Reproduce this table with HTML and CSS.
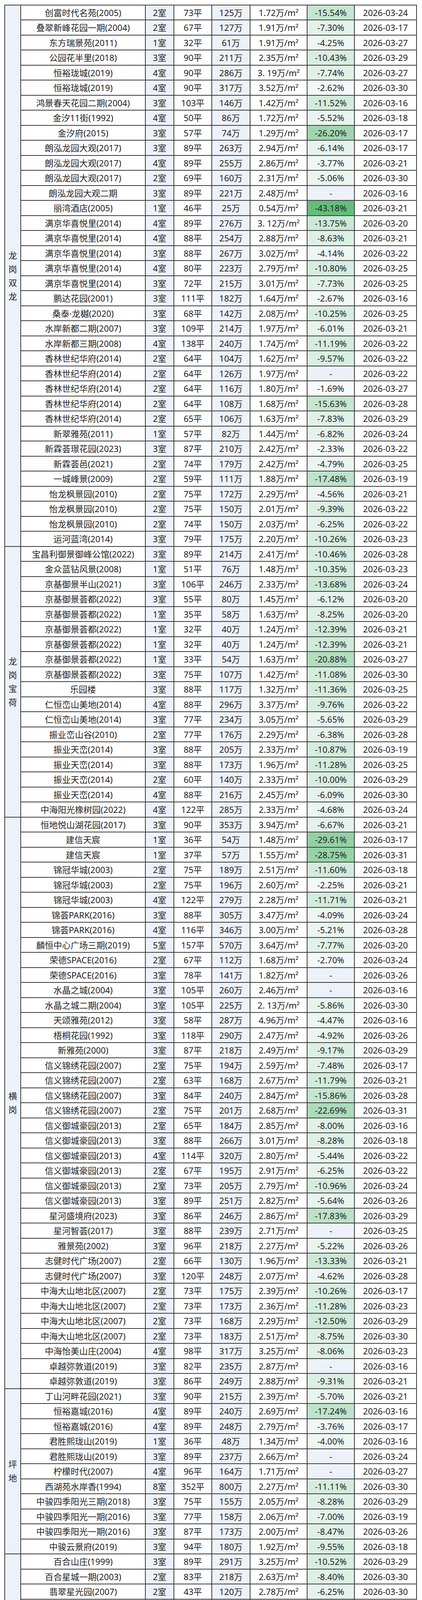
FILE: index.html
```html
<!DOCTYPE html>
<html lang="zh-CN">
<head>
<meta charset="utf-8">
<title>二手房降价明细</title>
<link rel="stylesheet" href="styles.css">
</head>
<body>
<div class="sheet">
<div class="region span-36"><span class="label">龙岗双龙</span></div>
<div class="row"><span>创富时代名苑(2005)</span><span>2室</span><span>73平</span><span>125万</span><span>1.72万/m²</span><span class="s" style="--p:15.54">-15.54%</span><span>2026-03-24</span></div>
<div class="row"><span>叠翠新峰花园一期(2004)</span><span>2室</span><span>67平</span><span>127万</span><span>1.91万/m²</span><span class="s" style="--p:7.30">-7.30%</span><span>2026-03-17</span></div>
<div class="row"><span>东方瑞景苑(2011)</span><span>1室</span><span>32平</span><span>61万</span><span>1.91万/m²</span><span class="s" style="--p:4.25">-4.25%</span><span>2026-03-27</span></div>
<div class="row"><span>公园花半里(2018)</span><span>3室</span><span>90平</span><span>211万</span><span>2.35万/m²</span><span class="s" style="--p:10.43">-10.43%</span><span>2026-03-29</span></div>
<div class="row"><span>恒裕珑城(2019)</span><span>4室</span><span>90平</span><span>286万</span><span>3. 19万/m²</span><span class="s" style="--p:7.74">-7.74%</span><span>2026-03-27</span></div>
<div class="row"><span>恒裕珑城(2019)</span><span>4室</span><span>90平</span><span>317万</span><span>3.52万/m²</span><span class="s" style="--p:2.62">-2.62%</span><span>2026-03-30</span></div>
<div class="row"><span>鸿景春天花园二期(2004)</span><span>3室</span><span>103平</span><span>146万</span><span>1.42万/m²</span><span class="s" style="--p:11.52">-11.52%</span><span>2026-03-16</span></div>
<div class="row"><span>金汐11街(1992)</span><span>4室</span><span>50平</span><span>86万</span><span>1.72万/m²</span><span class="s" style="--p:5.52">-5.52%</span><span>2026-03-18</span></div>
<div class="row"><span>金汐府(2015)</span><span>3室</span><span>57平</span><span>74万</span><span>1.29万/m²</span><span class="s" style="--p:26.20">-26.20%</span><span>2026-03-17</span></div>
<div class="row"><span>朗泓龙园大观(2017)</span><span>3室</span><span>89平</span><span>263万</span><span>2.94万/m²</span><span class="s" style="--p:6.14">-6.14%</span><span>2026-03-17</span></div>
<div class="row"><span>朗泓龙园大观(2017)</span><span>4室</span><span>89平</span><span>255万</span><span>2.86万/m²</span><span class="s" style="--p:3.77">-3.77%</span><span>2026-03-21</span></div>
<div class="row"><span>朗泓龙园大观(2017)</span><span>2室</span><span>69平</span><span>160万</span><span>2.31万/m²</span><span class="s" style="--p:5.06">-5.06%</span><span>2026-03-30</span></div>
<div class="row"><span>朗泓龙园大观二期</span><span>3室</span><span>89平</span><span>221万</span><span>2.48万/m²</span><span>-</span><span>2026-03-16</span></div>
<div class="row"><span>丽湾酒店(2005)</span><span>1室</span><span>46平</span><span>25万</span><span>0.54万/m²</span><span class="s" style="--p:43.18">-43.18%</span><span>2026-03-21</span></div>
<div class="row"><span>满京华喜悦里(2014)</span><span>4室</span><span>89平</span><span>276万</span><span>3. 12万/m²</span><span class="s" style="--p:13.75">-13.75%</span><span>2026-03-20</span></div>
<div class="row"><span>满京华喜悦里(2014)</span><span>4室</span><span>88平</span><span>254万</span><span>2.88万/m²</span><span class="s" style="--p:8.63">-8.63%</span><span>2026-03-21</span></div>
<div class="row"><span>满京华喜悦里(2014)</span><span>3室</span><span>88平</span><span>267万</span><span>3.02万/m²</span><span class="s" style="--p:4.14">-4.14%</span><span>2026-03-22</span></div>
<div class="row"><span>满京华喜悦里(2014)</span><span>4室</span><span>80平</span><span>223万</span><span>2.79万/m²</span><span class="s" style="--p:10.80">-10.80%</span><span>2026-03-25</span></div>
<div class="row"><span>满京华喜悦里(2014)</span><span>3室</span><span>72平</span><span>215万</span><span>3.01万/m²</span><span class="s" style="--p:7.73">-7.73%</span><span>2026-03-25</span></div>
<div class="row"><span>鹏达花园(2001)</span><span>3室</span><span>111平</span><span>182万</span><span>1.64万/m²</span><span class="s" style="--p:2.67">-2.67%</span><span>2026-03-16</span></div>
<div class="row"><span>桑泰·龙樾(2020)</span><span>3室</span><span>68平</span><span>142万</span><span>2.08万/m²</span><span class="s" style="--p:10.25">-10.25%</span><span>2026-03-25</span></div>
<div class="row"><span>水岸新都二期(2007)</span><span>3室</span><span>109平</span><span>214万</span><span>1.97万/m²</span><span class="s" style="--p:6.01">-6.01%</span><span>2026-03-21</span></div>
<div class="row"><span>水岸新都三期(2008)</span><span>4室</span><span>138平</span><span>240万</span><span>1.74万/m²</span><span class="s" style="--p:11.19">-11.19%</span><span>2026-03-22</span></div>
<div class="row"><span>香林世纪华府(2014)</span><span>2室</span><span>64平</span><span>104万</span><span>1.62万/m²</span><span class="s" style="--p:9.57">-9.57%</span><span>2026-03-22</span></div>
<div class="row"><span>香林世纪华府(2014)</span><span>2室</span><span>64平</span><span>126万</span><span>1.97万/m²</span><span>-</span><span>2026-03-22</span></div>
<div class="row"><span>香林世纪华府(2014)</span><span>2室</span><span>64平</span><span>116万</span><span>1.80万/m²</span><span class="s" style="--p:1.69">-1.69%</span><span>2026-03-27</span></div>
<div class="row"><span>香林世纪华府(2014)</span><span>2室</span><span>64平</span><span>108万</span><span>1.68万/m²</span><span class="s" style="--p:15.63">-15.63%</span><span>2026-03-28</span></div>
<div class="row"><span>香林世纪华府(2014)</span><span>2室</span><span>65平</span><span>106万</span><span>1.63万/m²</span><span class="s" style="--p:7.83">-7.83%</span><span>2026-03-29</span></div>
<div class="row"><span>新翠雅苑(2011)</span><span>1室</span><span>57平</span><span>82万</span><span>1.44万/m²</span><span class="s" style="--p:6.82">-6.82%</span><span>2026-03-24</span></div>
<div class="row"><span>新霖荟璟花园(2023)</span><span>3室</span><span>87平</span><span>210万</span><span>2.42万/m²</span><span class="s" style="--p:2.33">-2.33%</span><span>2026-03-22</span></div>
<div class="row"><span>新霖荟邑(2021)</span><span>2室</span><span>74平</span><span>179万</span><span>2.42万/m²</span><span class="s" style="--p:4.79">-4.79%</span><span>2026-03-25</span></div>
<div class="row"><span>一城峰景(2009)</span><span>2室</span><span>59平</span><span>111万</span><span>1.88万/m²</span><span class="s" style="--p:17.48">-17.48%</span><span>2026-03-19</span></div>
<div class="row"><span>怡龙枫景园(2010)</span><span>2室</span><span>75平</span><span>172万</span><span>2.29万/m²</span><span class="s" style="--p:4.56">-4.56%</span><span>2026-03-21</span></div>
<div class="row"><span>怡龙枫景园(2010)</span><span>2室</span><span>75平</span><span>150万</span><span>2.01万/m²</span><span class="s" style="--p:9.39">-9.39%</span><span>2026-03-22</span></div>
<div class="row"><span>怡龙枫景园(2010)</span><span>2室</span><span>74平</span><span>150万</span><span>2.03万/m²</span><span class="s" style="--p:6.25">-6.25%</span><span>2026-03-22</span></div>
<div class="row"><span>运河蓝湾(2014)</span><span>3室</span><span>79平</span><span>175万</span><span>2.20万/m²</span><span class="s" style="--p:10.26">-10.26%</span><span>2026-03-23</span></div>

<div class="region span-18"><span class="label">龙岗宝荷</span></div>
<div class="row"><span>宝昌利御景御峰公馆(2022)</span><span>3室</span><span>89平</span><span>214万</span><span>2.41万/m²</span><span class="s" style="--p:10.46">-10.46%</span><span>2026-03-28</span></div>
<div class="row"><span>金众蓝钻风景(2008)</span><span>1室</span><span>51平</span><span>76万</span><span>1.48万/m²</span><span class="s" style="--p:10.35">-10.35%</span><span>2026-03-23</span></div>
<div class="row"><span>京基御景半山(2021)</span><span>3室</span><span>106平</span><span>246万</span><span>2.33万/m²</span><span class="s" style="--p:13.68">-13.68%</span><span>2026-03-24</span></div>
<div class="row"><span>京基御景荟都(2022)</span><span>3室</span><span>55平</span><span>80万</span><span>1.45万/m²</span><span class="s" style="--p:6.12">-6.12%</span><span>2026-03-20</span></div>
<div class="row"><span>京基御景荟都(2022)</span><span>1室</span><span>35平</span><span>58万</span><span>1.63万/m²</span><span class="s" style="--p:8.25">-8.25%</span><span>2026-03-20</span></div>
<div class="row"><span>京基御景荟都(2022)</span><span>1室</span><span>32平</span><span>40万</span><span>1.24万/m²</span><span class="s" style="--p:12.39">-12.39%</span><span>2026-03-21</span></div>
<div class="row"><span>京基御景荟都(2022)</span><span>1室</span><span>32平</span><span>40万</span><span>1.24万/m²</span><span class="s" style="--p:12.39">-12.39%</span><span>2026-03-21</span></div>
<div class="row"><span>京基御景荟都(2022)</span><span>1室</span><span>33平</span><span>54万</span><span>1.63万/m²</span><span class="s" style="--p:20.88">-20.88%</span><span>2026-03-27</span></div>
<div class="row"><span>京基御景荟都(2022)</span><span>3室</span><span>75平</span><span>107万</span><span>1.42万/m²</span><span class="s" style="--p:11.08">-11.08%</span><span>2026-03-30</span></div>
<div class="row"><span>乐园楼</span><span>3室</span><span>88平</span><span>117万</span><span>1.32万/m²</span><span class="s" style="--p:11.36">-11.36%</span><span>2026-03-25</span></div>
<div class="row"><span>仁恒峦山美地(2014)</span><span>4室</span><span>88平</span><span>296万</span><span>3.37万/m²</span><span class="s" style="--p:9.76">-9.76%</span><span>2026-03-22</span></div>
<div class="row"><span>仁恒峦山美地(2014)</span><span>3室</span><span>77平</span><span>234万</span><span>3.05万/m²</span><span class="s" style="--p:5.65">-5.65%</span><span>2026-03-29</span></div>
<div class="row"><span>振业峦山谷(2010)</span><span>2室</span><span>77平</span><span>176万</span><span>2.29万/m²</span><span class="s" style="--p:6.38">-6.38%</span><span>2026-03-28</span></div>
<div class="row"><span>振业天峦(2014)</span><span>3室</span><span>88平</span><span>205万</span><span>2.33万/m²</span><span class="s" style="--p:10.87">-10.87%</span><span>2026-03-19</span></div>
<div class="row"><span>振业天峦(2014)</span><span>3室</span><span>88平</span><span>173万</span><span>1.96万/m²</span><span class="s" style="--p:11.28">-11.28%</span><span>2026-03-25</span></div>
<div class="row"><span>振业天峦(2014)</span><span>2室</span><span>60平</span><span>140万</span><span>2.33万/m²</span><span class="s" style="--p:10.00">-10.00%</span><span>2026-03-29</span></div>
<div class="row"><span>振业天峦(2014)</span><span>4室</span><span>88平</span><span>216万</span><span>2.45万/m²</span><span class="s" style="--p:6.09">-6.09%</span><span>2026-03-30</span></div>
<div class="row"><span>中海阳光橡树园(2022)</span><span>4室</span><span>122平</span><span>285万</span><span>2.33万/m²</span><span class="s" style="--p:4.68">-4.68%</span><span>2026-03-24</span></div>

<div class="region span-38"><span class="label">横岗</span></div>
<div class="row"><span>恒地悦山湖花园(2017)</span><span>3室</span><span>90平</span><span>353万</span><span>3.94万/m²</span><span class="s" style="--p:6.67">-6.67%</span><span>2026-03-21</span></div>
<div class="row"><span>建信天宸</span><span>1室</span><span>36平</span><span>54万</span><span>1.48万/m²</span><span class="s" style="--p:29.61">-29.61%</span><span>2026-03-17</span></div>
<div class="row"><span>建信天宸</span><span>1室</span><span>37平</span><span>57万</span><span>1.55万/m²</span><span class="s" style="--p:28.75">-28.75%</span><span>2026-03-31</span></div>
<div class="row"><span>锦冠华城(2003)</span><span>2室</span><span>75平</span><span>189万</span><span>2.51万/m²</span><span class="s" style="--p:11.60">-11.60%</span><span>2026-03-18</span></div>
<div class="row"><span>锦冠华城(2003)</span><span>2室</span><span>75平</span><span>196万</span><span>2.60万/m²</span><span class="s" style="--p:2.25">-2.25%</span><span>2026-03-21</span></div>
<div class="row"><span>锦冠华城(2003)</span><span>4室</span><span>122平</span><span>279万</span><span>2.28万/m²</span><span class="s" style="--p:11.71">-11.71%</span><span>2026-03-21</span></div>
<div class="row"><span>锦荟PARK(2016)</span><span>3室</span><span>88平</span><span>305万</span><span>3.47万/m²</span><span class="s" style="--p:4.09">-4.09%</span><span>2026-03-24</span></div>
<div class="row"><span>锦荟PARK(2016)</span><span>4室</span><span>116平</span><span>346万</span><span>3.00万/m²</span><span class="s" style="--p:5.21">-5.21%</span><span>2026-03-28</span></div>
<div class="row"><span>麟恒中心广场三期(2019)</span><span>5室</span><span>157平</span><span>570万</span><span>3.64万/m²</span><span class="s" style="--p:7.77">-7.77%</span><span>2026-03-20</span></div>
<div class="row"><span>荣德SPACE(2016)</span><span>2室</span><span>67平</span><span>112万</span><span>1.68万/m²</span><span class="s" style="--p:2.70">-2.70%</span><span>2026-03-24</span></div>
<div class="row"><span>荣德SPACE(2016)</span><span>3室</span><span>78平</span><span>141万</span><span>1.82万/m²</span><span>-</span><span>2026-03-26</span></div>
<div class="row"><span>水晶之城(2004)</span><span>3室</span><span>105平</span><span>260万</span><span>2.46万/m²</span><span>-</span><span>2026-03-16</span></div>
<div class="row"><span>水晶之城二期(2004)</span><span>3室</span><span>105平</span><span>225万</span><span>2. 13万/m²</span><span class="s" style="--p:5.86">-5.86%</span><span>2026-03-30</span></div>
<div class="row"><span>天颂雅苑(2012)</span><span>3室</span><span>58平</span><span>287万</span><span>4.96万/m²</span><span class="s" style="--p:4.47">-4.47%</span><span>2026-03-16</span></div>
<div class="row"><span>梧桐花园(1992)</span><span>3室</span><span>118平</span><span>290万</span><span>2.47万/m²</span><span class="s" style="--p:4.92">-4.92%</span><span>2026-03-26</span></div>
<div class="row"><span>新雅苑(2000)</span><span>3室</span><span>87平</span><span>218万</span><span>2.49万/m²</span><span class="s" style="--p:9.17">-9.17%</span><span>2026-03-29</span></div>
<div class="row"><span>信义锦绣花园(2007)</span><span>2室</span><span>75平</span><span>194万</span><span>2.59万/m²</span><span class="s" style="--p:7.48">-7.48%</span><span>2026-03-17</span></div>
<div class="row"><span>信义锦绣花园(2007)</span><span>2室</span><span>63平</span><span>168万</span><span>2.67万/m²</span><span class="s" style="--p:11.79">-11.79%</span><span>2026-03-21</span></div>
<div class="row"><span>信义锦绣花园(2007)</span><span>3室</span><span>84平</span><span>240万</span><span>2.84万/m²</span><span class="s" style="--p:15.86">-15.86%</span><span>2026-03-28</span></div>
<div class="row"><span>信义锦绣花园(2007)</span><span>2室</span><span>75平</span><span>201万</span><span>2.68万/m²</span><span class="s" style="--p:22.69">-22.69%</span><span>2026-03-31</span></div>
<div class="row"><span>信义御城豪园(2013)</span><span>2室</span><span>65平</span><span>184万</span><span>2.85万/m²</span><span class="s" style="--p:8.00">-8.00%</span><span>2026-03-16</span></div>
<div class="row"><span>信义御城豪园(2013)</span><span>3室</span><span>88平</span><span>266万</span><span>3.01万/m²</span><span class="s" style="--p:8.28">-8.28%</span><span>2026-03-18</span></div>
<div class="row"><span>信义御城豪园(2013)</span><span>4室</span><span>114平</span><span>320万</span><span>2.80万/m²</span><span class="s" style="--p:5.44">-5.44%</span><span>2026-03-22</span></div>
<div class="row"><span>信义御城豪园(2013)</span><span>2室</span><span>67平</span><span>195万</span><span>2.91万/m²</span><span class="s" style="--p:6.25">-6.25%</span><span>2026-03-22</span></div>
<div class="row"><span>信义御城豪园(2013)</span><span>2室</span><span>73平</span><span>205万</span><span>2.79万/m²</span><span class="s" style="--p:10.96">-10.96%</span><span>2026-03-24</span></div>
<div class="row"><span>信义御城豪园(2013)</span><span>3室</span><span>89平</span><span>251万</span><span>2.82万/m²</span><span class="s" style="--p:5.64">-5.64%</span><span>2026-03-26</span></div>
<div class="row"><span>星河盛境府(2023)</span><span>3室</span><span>86平</span><span>246万</span><span>2.86万/m²</span><span class="s" style="--p:17.83">-17.83%</span><span>2026-03-29</span></div>
<div class="row"><span>星河智荟(2017)</span><span>3室</span><span>88平</span><span>239万</span><span>2.71万/m²</span><span>-</span><span>2026-03-25</span></div>
<div class="row"><span>雅景苑(2002)</span><span>3室</span><span>96平</span><span>218万</span><span>2.27万/m²</span><span class="s" style="--p:5.22">-5.22%</span><span>2026-03-26</span></div>
<div class="row"><span>志健时代广场(2007)</span><span>2室</span><span>66平</span><span>130万</span><span>1.96万/m²</span><span class="s" style="--p:13.33">-13.33%</span><span>2026-03-21</span></div>
<div class="row"><span>志健时代广场(2007)</span><span>3室</span><span>120平</span><span>248万</span><span>2.07万/m²</span><span class="s" style="--p:4.62">-4.62%</span><span>2026-03-28</span></div>
<div class="row"><span>中海大山地北区(2007)</span><span>2室</span><span>73平</span><span>175万</span><span>2.39万/m²</span><span class="s" style="--p:10.26">-10.26%</span><span>2026-03-17</span></div>
<div class="row"><span>中海大山地北区(2007)</span><span>2室</span><span>73平</span><span>173万</span><span>2.36万/m²</span><span class="s" style="--p:11.28">-11.28%</span><span>2026-03-23</span></div>
<div class="row"><span>中海大山地北区(2007)</span><span>2室</span><span>73平</span><span>168万</span><span>2.29万/m²</span><span class="s" style="--p:12.50">-12.50%</span><span>2026-03-29</span></div>
<div class="row"><span>中海大山地北区(2007)</span><span>2室</span><span>73平</span><span>183万</span><span>2.51万/m²</span><span class="s" style="--p:8.75">-8.75%</span><span>2026-03-30</span></div>
<div class="row"><span>中海怡美山庄(2004)</span><span>4室</span><span>98平</span><span>317万</span><span>3.25万/m²</span><span class="s" style="--p:8.06">-8.06%</span><span>2026-03-23</span></div>
<div class="row"><span>卓越弥敦道(2019)</span><span>3室</span><span>82平</span><span>235万</span><span>2.87万/m²</span><span>-</span><span>2026-03-16</span></div>
<div class="row"><span>卓越弥敦道(2019)</span><span>3室</span><span>86平</span><span>249万</span><span>2.88万/m²</span><span class="s" style="--p:9.31">-9.31%</span><span>2026-03-21</span></div>

<div class="region span-11"><span class="label">坪地</span></div>
<div class="row"><span>丁山河畔花园(2021)</span><span>3室</span><span>90平</span><span>215万</span><span>2.39万/m²</span><span class="s" style="--p:5.70">-5.70%</span><span>2026-03-21</span></div>
<div class="row"><span>恒裕嘉城(2016)</span><span>4室</span><span>89平</span><span>240万</span><span>2.69万/m²</span><span class="s" style="--p:17.24">-17.24%</span><span>2026-03-16</span></div>
<div class="row"><span>恒裕嘉城(2016)</span><span>4室</span><span>89平</span><span>248万</span><span>2.79万/m²</span><span class="s" style="--p:3.76">-3.76%</span><span>2026-03-17</span></div>
<div class="row"><span>君胜熙珑山(2019)</span><span>1室</span><span>36平</span><span>48万</span><span>1.34万/m²</span><span class="s" style="--p:4.00">-4.00%</span><span>2026-03-16</span></div>
<div class="row"><span>君胜熙珑山(2019)</span><span>3室</span><span>89平</span><span>237万</span><span>2.66万/m²</span><span>-</span><span>2026-03-24</span></div>
<div class="row"><span>柠檬时代(2007)</span><span>4室</span><span>96平</span><span>164万</span><span>1.71万/m²</span><span>-</span><span>2026-03-27</span></div>
<div class="row"><span>西湖苑水岸香(1994)</span><span>8室</span><span>352平</span><span>800万</span><span>2.27万/m²</span><span class="s" style="--p:11.11">-11.11%</span><span>2026-03-30</span></div>
<div class="row"><span>中骏四季阳光三期(2018)</span><span>3室</span><span>75平</span><span>155万</span><span>2.05万/m²</span><span class="s" style="--p:8.28">-8.28%</span><span>2026-03-29</span></div>
<div class="row"><span>中骏四季阳光一期(2016)</span><span>3室</span><span>77平</span><span>158万</span><span>2.06万/m²</span><span class="s" style="--p:7.00">-7.00%</span><span>2026-03-19</span></div>
<div class="row"><span>中骏四季阳光一期(2016)</span><span>3室</span><span>87平</span><span>173万</span><span>2.00万/m²</span><span class="s" style="--p:8.47">-8.47%</span><span>2026-03-26</span></div>
<div class="row"><span>中骏云景府(2019)</span><span>3室</span><span>94平</span><span>180万</span><span>1.92万/m²</span><span class="s" style="--p:9.55">-9.55%</span><span>2026-03-18</span></div>

<div class="region span-33"><span class="label">布吉关</span></div>
<div class="row"><span>百合山庄(1999)</span><span>3室</span><span>89平</span><span>291万</span><span>3.25万/m²</span><span class="s" style="--p:10.52">-10.52%</span><span>2026-03-29</span></div>
<div class="row"><span>百合星城一期(2003)</span><span>2室</span><span>83平</span><span>218万</span><span>2.63万/m²</span><span class="s" style="--p:8.40">-8.40%</span><span>2026-03-30</span></div>
<div class="row"><span>翡翠星光园(2007)</span><span>2室</span><span>43平</span><span>120万</span><span>2.78万/m²</span><span class="s" style="--p:6.25">-6.25%</span><span>2026-03-30</span></div>
<div class="row"><span>国展苑(1999)</span><span>1室</span><span>49平</span><span>100万</span><span>2.04万/m²</span><span class="s" style="--p:13.04">-13.04%</span><span>2026-03-25</span></div>
<div class="row"><span>国展苑(1999)</span><span>2室</span><span>56平</span><span>147万</span><span>2.63万/m²</span><span>-</span><span>2026-03-28</span></div>
<div class="row"><span>吉星花园(1985)</span><span>3室</span><span>81平</span><span>160万</span><span>1.97万/m²</span><span class="s" style="--p:7.80">-7.80%</span><span>2026-03-16</span></div>
<div class="row"><span>佳兆业可园四期(2005)</span><span>3室</span><span>93平</span><span>350万</span><span>3.78万/m²</span><span class="s" style="--p:5.41">-5.41%</span><span>2026-03-21</span></div>
<div class="row"><span>佳兆业可园四期(2005)</span><span>2室</span><span>69平</span><span>270万</span><span>3.91万/m²</span><span class="s" style="--p:10.00">-10.00%</span><span>2026-03-22</span></div>
<div class="row"><span>佳兆业可园四期(2005)</span><span>3室</span><span>98平</span><span>363万</span><span>3.69万/m²</span><span class="blank"></span><span>2026-03-26</span></div>
<div class="row"><span>京南华庭(2007)</span><span>1室</span><span>33平</span><span>41万</span><span>1.24万/m²</span><span class="s" style="--p:21.15">-21.15%</span><span>2026-03-28</span></div>
<div class="row"><span>龙珠花园B区(1996)</span><span>2室</span><span>58平</span><span>135万</span><span>2.31万/m²</span><span>-</span><span>2026-03-23</span></div>
<div class="row"><span>龙珠花园B区(1996)</span><span>3室</span><span>76平</span><span>176万</span><span>2.30万/m²</span><span>-</span><span>2026-03-23</span></div>
<div class="row"><span>龙珠花园B区(1996)</span><span>3室</span><span>76平</span><span>169万</span><span>2.22万/m²</span><span>-</span><span>2026-03-29</span></div>
<div class="row"><span>龙珠花园C区(1997)</span><span>2室</span><span>77平</span><span>186万</span><span>2.43万/m²</span><span class="s" style="--p:2.62">-2.62%</span><span>2026-03-17</span></div>
<div class="row"><span>龙珠花园C区(1997)</span><span>3室</span><span>86平</span><span>205万</span><span>2.39万/m²</span><span>-</span><span>2026-03-21</span></div>
<div class="row"><span>荣超花园(1997)</span><span>1室</span><span>46平</span><span>119万</span><span>2.59万/m²</span><span class="s" style="--p:8.46">-8.46%</span><span>2026-03-16</span></div>
<div class="row"><span>万科红二期(2013)</span><span>2室</span><span>72平</span><span>290万</span><span>4.03万/m²</span><span class="s" style="--p:8.81">-8.81%</span><span>2026-03-29</span></div>
<div class="row"><span>万科红三期(2014)</span><span>2室</span><span>68平</span><span>185万</span><span>2.73万/m²</span><span class="s" style="--p:5.13">-5.13%</span><span>2026-03-20</span></div>
<div class="row"><span>万科红四期(2013)</span><span>3室</span><span>89平</span><span>390万</span><span>4.37万/m²</span><span class="s" style="--p:3.70">-3.70%</span><span>2026-03-18</span></div>
<div class="row"><span>万科红四期(2013)</span><span>2室</span><span>78平</span><span>301万</span><span>3.88万/m²</span><span class="s" style="--p:15.87">-15.87%</span><span>2026-03-21</span></div>
<div class="row"><span>万科红四期(2013)</span><span>2室</span><span>78平</span><span>292万</span><span>3.76万/m²</span><span class="s" style="--p:10.98">-10.98%</span><span>2026-03-22</span></div>
<div class="row"><span>信义假日名城博雅园(2003)</span><span>3室</span><span>90平</span><span>300万</span><span>3.35万/m²</span><span class="s" style="--p:8.54">-8.54%</span><span>2026-03-17</span></div>
<div class="row"><span>信义假日名城六期溢芳园(2008)</span><span>2室</span><span>69平</span><span>206万</span><span>2.98万/m²</span><span class="s" style="--p:9.65">-9.65%</span><span>2026-03-30</span></div>
<div class="row"><span>信义假日名城五期(2006)</span><span>2室</span><span>67平</span><span>232万</span><span>3.45万/m²</span><span>-</span><span>2026-03-30</span></div>
<div class="row"><span>信义金御半山三期(2017)</span><span>5室</span><span>149平</span><span>925万</span><span>6.21万/m²</span><span class="s" style="--p:14.35">-14.35%</span><span>2026-03-31</span></div>
<div class="row"><span>信义荔山公馆(2009)</span><span>2室</span><span>74平</span><span>283万</span><span>3.80万/m²</span><span class="s" style="--p:14.30">-14.30%</span><span>2026-03-16</span></div>
<div class="row"><span>信义荔山公馆(2009)</span><span>3室</span><span>89平</span><span>377万</span><span>4.25万/m²</span><span>-</span><span>2026-03-16</span></div>
<div class="row"><span>信义荔山公馆(2009)</span><span>3室</span><span>88平</span><span>440万</span><span>5.00万/m²</span><span class="s" style="--p:6.43">-6.43%</span><span>2026-03-19</span></div>
<div class="row"><span>信义荔山公馆(2009)</span><span>2室</span><span>68平</span><span>291万</span><span>4.30万/m²</span><span class="s" style="--p:7.62">-7.62%</span><span>2026-03-22</span></div>
<div class="row"><span>信义荔山公馆(2009)</span><span>2室</span><span>74平</span><span>336万</span><span>4.55万/m²</span><span class="s" style="--p:10.40">-10.40%</span><span>2026-03-24</span></div>
<div class="row"><span>信义荔山公馆(2009)</span><span>3室</span><span>89平</span><span>435万</span><span>4.91万/m²</span><span class="s" style="--p:5.43">-5.43%</span><span>2026-03-29</span></div>
<div class="row"><span>信义荔山公馆(2009)</span><span>4室</span><span>88平</span><span>376万</span><span>4.25万/m²</span><span class="s" style="--p:10.48">-10.48%</span><span>2026-03-29</span></div>
<div class="row"><span>中加名园(2002)</span><span>2室</span><span>66平</span><span>203万</span><span>3.06万/m²</span><span class="s" style="--p:24.33">-24.33%</span><span>2026-03-19</span></div>
</div>
</body>
</html>
```

FILE: styles.css
```css
html, body {
  margin: 0;
  padding: 0;
  background: #ffffff;
}

body {
  font-family: "Noto Sans", "Noto Sans CJK SC", sans-serif;
  color: #222222;
}

.sheet {
  display: grid;
  grid-template-columns: 39px 317px 71px 95px 96px 144px 119px 157px;
  grid-auto-rows: 36.5px;
  gap: 2px;
  padding: 2px;
  width: max-content;
  margin: 11.7px 0 0 11px;
  background: #3b3b3b;
  font-size: 22px;
}

.row {
  display: contents;
}

.row > span {
  display: flex;
  align-items: center;
  justify-content: center;
  background: #ffffff;
  white-space: nowrap;
  overflow: hidden;
  line-height: 1;
}

.row > span:first-child {
  border-left: 13px solid #ffffff;
  border-right: 13px solid #ffffff;
}

.row > span:nth-child(2),
.row > span:nth-child(4),
.row > span:nth-child(6) {
  background: #edf1f9;
}

.row > span.s {
  background: rgb(calc(252 - 3.5433 * var(--p)) calc(252 - 1.4358 * var(--p)) calc(255 - 3.057 * var(--p)));
}

.row > span.blank {
  background: #f7f9fd;
}

.region {
  display: flex;
  align-items: center;
  justify-content: center;
  background: #edf1f9;
}

.label {
  width: 1em;
  line-height: 35px;
  text-align: center;
  word-break: break-all;
  white-space: normal;
}

.span-36 { grid-row: span 36; }
.span-18 { grid-row: span 18; }
.span-38 { grid-row: span 38; }
.span-11 { grid-row: span 11; }
.span-33 { grid-row: span 33; }
```
